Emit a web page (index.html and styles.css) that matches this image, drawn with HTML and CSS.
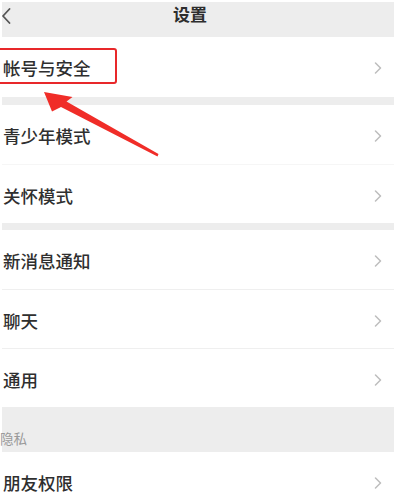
FILE: index.html
```html
<!DOCTYPE html>
<html lang="zh-CN">
<head>
<meta charset="utf-8">
<title>设置</title>
<link rel="stylesheet" href="styles.css">
</head>
<body>
<div class="page">
  <header class="header">
    <span class="back">
      <svg width="10" height="16" viewBox="0 0 10 16"><path d="M8.5 1 L2 8 L8.5 15" fill="none" stroke="#555" stroke-width="1.8" stroke-linecap="round" stroke-linejoin="round"/></svg>
    </span>
    <h1 class="title">设置</h1>
    <span></span>
  </header>

  <section class="group">
    <div class="row row-first"><span class="label">帐号与安全</span><span class="chev"><svg width="8" height="12" viewBox="0 0 8 12"><path d="M1.5 1 L6.5 6 L1.5 11" fill="none" stroke="#bdbdbd" stroke-width="1.5" stroke-linecap="round" stroke-linejoin="round"/></svg></span></div>
  </section>
  <div class="gap gap-8"></div>
  <section class="group">
    <div class="row"><span class="label">青少年模式</span><span class="chev"><svg width="8" height="12" viewBox="0 0 8 12"><path d="M1.5 1 L6.5 6 L1.5 11" fill="none" stroke="#bdbdbd" stroke-width="1.5" stroke-linecap="round" stroke-linejoin="round"/></svg></span></div>
    <div class="row row-faint"><span class="label">关怀模式</span><span class="chev"><svg width="8" height="12" viewBox="0 0 8 12"><path d="M1.5 1 L6.5 6 L1.5 11" fill="none" stroke="#bdbdbd" stroke-width="1.5" stroke-linecap="round" stroke-linejoin="round"/></svg></span></div>
  </section>
  <div class="gap gap-7"></div>
  <section class="group">
    <div class="row"><span class="label">新消息通知</span><span class="chev"><svg width="8" height="12" viewBox="0 0 8 12"><path d="M1.5 1 L6.5 6 L1.5 11" fill="none" stroke="#bdbdbd" stroke-width="1.5" stroke-linecap="round" stroke-linejoin="round"/></svg></span></div>
    <div class="row"><span class="label">聊天</span><span class="chev"><svg width="8" height="12" viewBox="0 0 8 12"><path d="M1.5 1 L6.5 6 L1.5 11" fill="none" stroke="#bdbdbd" stroke-width="1.5" stroke-linecap="round" stroke-linejoin="round"/></svg></span></div>
    <div class="row"><span class="label">通用</span><span class="chev"><svg width="8" height="12" viewBox="0 0 8 12"><path d="M1.5 1 L6.5 6 L1.5 11" fill="none" stroke="#bdbdbd" stroke-width="1.5" stroke-linecap="round" stroke-linejoin="round"/></svg></span></div>
  </section>
  <div class="section-title"><span>隐私</span></div>
  <section class="group">
    <div class="row"><span class="label">朋友权限</span><span class="chev"><svg width="8" height="12" viewBox="0 0 8 12"><path d="M1.5 1 L6.5 6 L1.5 11" fill="none" stroke="#bdbdbd" stroke-width="1.5" stroke-linecap="round" stroke-linejoin="round"/></svg></span></div>
  </section>
</div>

<div class="highlight-box"></div>
<svg class="arrow" width="400" height="492" viewBox="0 0 400 492">
  <polygon points="44,92 72.5,97 66.5,101.5 158.5,154 157.5,156.5 61,107 52,111.5" fill="#f02d28"/>
</svg>
</body>
</html>
```

FILE: styles.css
```css
* { box-sizing: border-box; }

html, body {
  margin: 0;
  padding: 0;
  background: #ffffff;
  width: 400px;
  height: 492px;
  overflow: hidden;
}

body {
  font-family: "Noto Sans CJK SC", "Noto Sans", sans-serif;
  color: #333333;
  position: relative;
}

.page {
  width: 392px;
  margin-left: 2px;
  padding-top: 2px;
}

.header {
  height: 35px;
  background: #ededed;
  display: grid;
  grid-template-columns: 10px 1fr 26px;
  align-items: start;
}

.back {
  display: flex;
  margin-left: -1px;
  padding-top: 6px;
}

.title {
  margin: 0;
  text-align: center;
  font-size: 17px;
  font-weight: 700;
  line-height: 24px;
  color: #2e2e2e;
}

.group {
  background: #ffffff;
}

.row {
  height: 59px;
  display: flex;
  align-items: center;
  justify-content: space-between;
  padding: 3px 12px 0 1px;
}

.row-first {
  height: 60px;
  padding-top: 2px;
}

.row + .row {
  border-top: 1px solid #efefef;
}

.row + .row-faint {
  border-top-color: #f6f6f6;
}

.label {
  font-size: 17.5px;
  line-height: 24px;
  font-weight: 500;
  color: #2f2f2f;
}

.chev {
  display: flex;
}

.gap {
  background: #ededed;
}

.gap-8 { height: 8px; }
.gap-7 { height: 7px; }

.section-title {
  height: 45px;
  background: #ededed;
  display: flex;
  align-items: flex-end;
  padding: 0 0 4px 0;
}

.section-title span {
  font-size: 13.5px;
  line-height: 20px;
  color: #9a9a9a;
  margin-left: -2px;
}

.highlight-box {
  position: absolute;
  left: -4px;
  top: 48px;
  width: 121px;
  height: 36px;
  border: 2px solid #e8282a;
  border-radius: 3px;
}

.arrow {
  position: absolute;
  left: 0;
  top: 0;
  pointer-events: none;
}
```
